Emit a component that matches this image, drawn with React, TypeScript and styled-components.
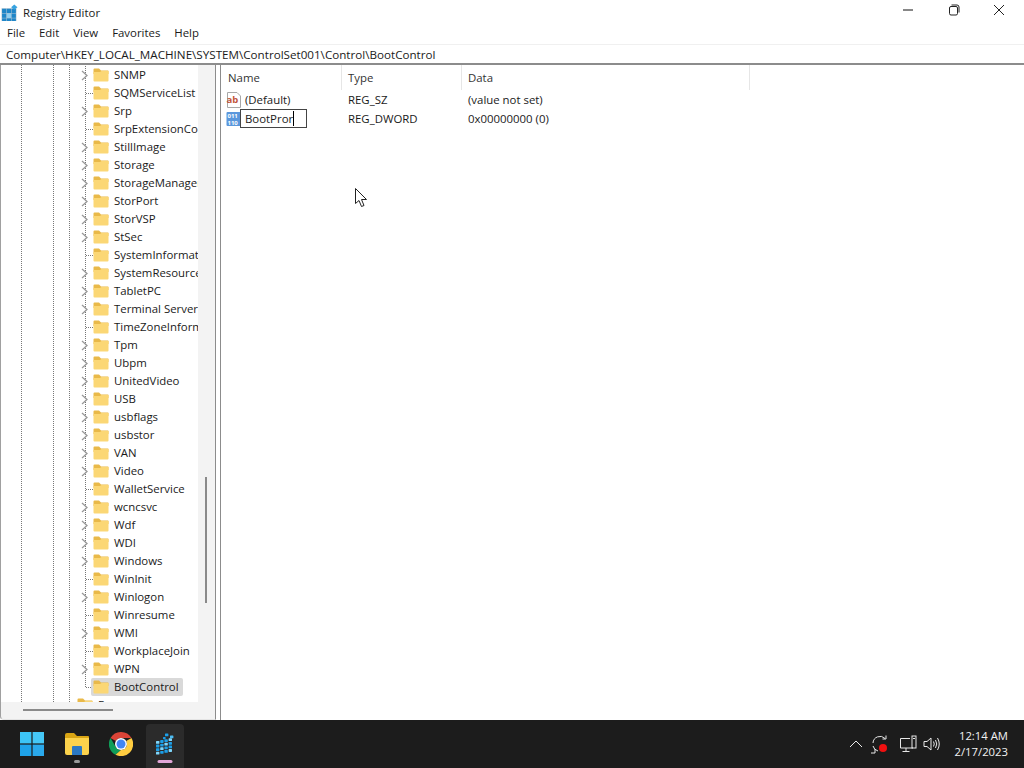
import styled, { createGlobalStyle } from 'styled-components';

const FONT = '"Open Sans", "Noto Sans", "Liberation Sans", sans-serif';

const GlobalStyle = createGlobalStyle`
  html, body {
    margin: 0;
    padding: 0;
    width: 1024px;
    height: 768px;
    overflow: hidden;
    background: #ffffff;
  }
  * { box-sizing: border-box; }
  svg { flex-shrink: 0; }
`;

const TREE_ITEMS: { name: string; expandable: boolean }[] = [
  { name: 'SNMP', expandable: true },
  { name: 'SQMServiceList', expandable: false },
  { name: 'Srp', expandable: true },
  { name: 'SrpExtensionConfig', expandable: false },
  { name: 'StillImage', expandable: true },
  { name: 'Storage', expandable: true },
  { name: 'StorageManagement', expandable: true },
  { name: 'StorPort', expandable: true },
  { name: 'StorVSP', expandable: true },
  { name: 'StSec', expandable: true },
  { name: 'SystemInformation', expandable: false },
  { name: 'SystemResources', expandable: true },
  { name: 'TabletPC', expandable: true },
  { name: 'Terminal Server', expandable: true },
  { name: 'TimeZoneInformation', expandable: false },
  { name: 'Tpm', expandable: true },
  { name: 'Ubpm', expandable: true },
  { name: 'UnitedVideo', expandable: true },
  { name: 'USB', expandable: true },
  { name: 'usbflags', expandable: true },
  { name: 'usbstor', expandable: true },
  { name: 'VAN', expandable: true },
  { name: 'Video', expandable: true },
  { name: 'WalletService', expandable: false },
  { name: 'wcncsvc', expandable: true },
  { name: 'Wdf', expandable: true },
  { name: 'WDI', expandable: true },
  { name: 'Windows', expandable: true },
  { name: 'WinInit', expandable: false },
  { name: 'Winlogon', expandable: true },
  { name: 'Winresume', expandable: false },
  { name: 'WMI', expandable: true },
  { name: 'WorkplaceJoin', expandable: false },
  { name: 'WPN', expandable: true },
];

function RegeditIcon() {
  const cells = [];
  for (let row = 0; row < 3; row++) {
    for (let col = 0; col < 3; col++) {
      cells.push(<rect key={`${row}-${col}`} x={1 + col * 4.5} y={4.5 + row * 4.5} width={4} height={4} fill={col === 1 && row === 1 ? '#8fd0f2' : '#1f86c8'} />);
    }
  }
  return (
    <svg width="17" height="17" viewBox="0 0 16 16">
      <rect x="0.5" y="4" width="14" height="12" fill="#0b4f80" opacity="0.35" />
      {cells}
      <path d="M12.5 0.5 L15.5 3 L12.5 5.5 L9.5 3 Z" fill="#37a3e0" />
    </svg>
  );
}

// taskbar version of the regedit logo, tilted cubes with a few loose ones at the top
function RegeditTaskIcon() {
  const cubes = [];
  for (let row = 0; row < 4; row++) {
    for (let col = 0; col < 4; col++) {
      const x = 2 + col * 4.2;
      const y = 9 + row * 3.6 - col * 0.9;
      cubes.push(<rect key={`${row}-${col}`} x={x} y={y} width={3.4} height={2.8} rx={0.6} fill={(row + col) % 3 === 0 ? '#7fd6fb' : '#1c9fe8'} />);
    }
  }
  return (
    <svg width="22" height="26" viewBox="0 0 22 26">
      {cubes}
      <rect x="11" y="1.5" width="3.4" height="2.8" rx="0.6" fill="#1c9fe8" />
      <rect x="16" y="3.5" width="3.4" height="2.8" rx="0.6" fill="#4dbcf2" />
      <rect x="9" y="5" width="2.6" height="2.2" rx="0.6" fill="#1c9fe8" />
    </svg>
  );
}

function FolderIcon() {
  return (
    <svg width="16" height="14" viewBox="0 0 16 14">
      <path d="M0.5 1.5 Q0.5 0.5 1.5 0.5 H6 L8 2.5 H15 Q15.5 2.5 15.5 3.5 V6 H0.5 Z" fill="#e9b949" />
      <path d="M0.5 4 H7 L8.5 3 H15.5 V12.5 Q15.5 13.5 14.5 13.5 H1.5 Q0.5 13.5 0.5 12.5 Z" fill="#fbd775" />
    </svg>
  );
}

function Chevron() {
  return (
    <svg width="7" height="11" viewBox="0 0 7 11">
      <path d="M1 1 L6 5.5 L1 10" fill="none" stroke="#999" strokeWidth="1.3" />
    </svg>
  );
}

export default function App() {
  return (
    <Screen>
      <GlobalStyle />
      <Window>
        <TitleBar>
          <TitleIcon><RegeditIcon /></TitleIcon>
          <TitleText>Registry Editor</TitleText>
          <WindowControls>
            <ControlButton>
              <svg width="12" height="12" viewBox="0 0 12 12"><path d="M1 6 H11" stroke="#111" strokeWidth="1" /></svg>
            </ControlButton>
            <ControlButton>
              <svg width="12" height="12" viewBox="0 0 12 12" fill="none" stroke="#222" strokeWidth="1">
                <rect x="1.5" y="2.5" width="8" height="8.5" rx="1.5" />
                <path d="M3.5 1 H9 Q11 1 11 3 V8.5" />
              </svg>
            </ControlButton>
            <ControlButton>
              <svg width="12" height="12" viewBox="0 0 12 12"><path d="M1 1 L11 11 M11 1 L1 11" stroke="#222" strokeWidth="1" /></svg>
            </ControlButton>
          </WindowControls>
        </TitleBar>

        <MenuBar>
          <MenuItem>File</MenuItem>
          <MenuItem>Edit</MenuItem>
          <MenuItem>View</MenuItem>
          <MenuItem>Favorites</MenuItem>
          <MenuItem>Help</MenuItem>
        </MenuBar>

        <AddressBar>Computer\HKEY_LOCAL_MACHINE\SYSTEM\ControlSet001\Control\BootControl</AddressBar>

        <Panes>
          <TreePane>
            <TreeBody>
              <TreeList>
                {TREE_ITEMS.map((item) => (
                  <TreeRow key={item.name} $leaf={!item.expandable}>
                    <ChevronSlot>{item.expandable && <Chevron />}</ChevronSlot>
                    <FolderIcon />
                    <TreeLabel>{item.name}</TreeLabel>
                  </TreeRow>
                ))}
                <TreeRow $leaf $last>
                  <ChevronSlot />
                  <SelectedLabel>
                    <FolderIcon />
                    <TreeLabel>BootControl</TreeLabel>
                  </SelectedLabel>
                </TreeRow>
                <ParentRow>
                  <FolderIcon />
                  <TreeLabel>Enum</TreeLabel>
                </ParentRow>
              </TreeList>
              <VerticalTrack>
                <VerticalThumb />
              </VerticalTrack>
            </TreeBody>
            <HorizontalTrack>
              <HorizontalThumb />
            </HorizontalTrack>
          </TreePane>

          <Splitter />

          <ValuesPane>
            <HeaderRow>
              <HeaderCell $width={121}>Name</HeaderCell>
              <HeaderCell $width={120}>Type</HeaderCell>
              <HeaderCell $width={288}>Data</HeaderCell>
            </HeaderRow>
            <ValueRow>
              <NameCell>
                <svg width="16" height="16" viewBox="0 0 16 16">
                  <path d="M1.5 0.5 H11 L14.5 4 V15.5 H1.5 Z" fill="#fff" stroke="#a8a8a8" />
                  <text x="0.5" y="10.5" fontSize="9.5" fontWeight="700" fill="#c2553a" fontFamily={FONT}>ab</text>
                </svg>
                <ValueName>(Default)</ValueName>
              </NameCell>
              <TypeCell>REG_SZ</TypeCell>
              <DataCell>(value not set)</DataCell>
            </ValueRow>
            <ValueRow>
              <NameCell>
                <svg width="16" height="16" viewBox="0 0 16 16">
                  <rect x="0.5" y="1" width="15" height="14" rx="1" fill="#5b97dc" />
                  <text x="1.5" y="7" fontSize="6" fontWeight="700" fill="#fff" fontFamily={FONT}>011</text>
                  <text x="1.5" y="13.5" fontSize="6" fontWeight="700" fill="#fff" fontFamily={FONT}>110</text>
                </svg>
                <RenameBox>BootPror<Caret /></RenameBox>
              </NameCell>
              <TypeCell>REG_DWORD</TypeCell>
              <DataCell>0x00000000 (0)</DataCell>
            </ValueRow>
          </ValuesPane>
        </Panes>
      </Window>

      <Taskbar>
        <TaskButton>
          <svg width="24" height="24" viewBox="0 0 24 24">
            <rect x="0" y="0" width="11.4" height="11.4" fill="#3cc4f5" />
            <rect x="12.6" y="0" width="11.4" height="11.4" fill="#45c8f7" />
            <rect x="0" y="12.6" width="11.4" height="11.4" fill="#1ea2e8" />
            <rect x="12.6" y="12.6" width="11.4" height="11.4" fill="#2aa9ec" />
          </svg>
        </TaskButton>
        <TaskButton $indicator="#9a9a9a">
          <svg width="26" height="24" viewBox="0 0 26 24">
            <path d="M1 3 Q1 1 3 1 H10 L13 4 H24 Q25 4 25 5 V8 H1 Z" fill="#d9a514" />
            <path d="M1 6 H25 V21 Q25 23 23 23 H3 Q1 23 1 21 Z" fill="#fbd24c" />
            <path d="M8 15 Q8 14 9 14 H17 Q18 14 18 15 V23 H8 Z" fill="#2b78c2" />
          </svg>
        </TaskButton>
        <TaskButton>
          <svg width="24" height="24" viewBox="0 0 48 48">
            <path d="M3 12 A24 24 0 0 1 24 0 A24 24 0 0 1 45 12 H24 A12 12 0 0 0 13.6 18 Z" fill="#db4437" />
            <path d="M3 12 A24 24 0 0 0 13 45.4 L24 36 A12 12 0 0 1 13.6 30 Z" fill="#0f9d58" />
            <path d="M45 12 A24 24 0 0 1 13 45.4 L24 36 A12 12 0 0 0 34.4 18 Z" fill="#ffcd40" />
            <circle cx="24" cy="24" r="12" fill="#fff" />
            <circle cx="24" cy="24" r="9" fill="#4285f4" />
          </svg>
        </TaskButton>
        <TaskButton $active $indicator="#e3a6d8" $wideIndicator>
          <RegeditTaskIcon />
        </TaskButton>

        <Tray>
          <TrayIcon $width={24}>
            <svg width="14" height="8" viewBox="0 0 14 8"><path d="M1 7 L7 1 L13 7" fill="none" stroke="#e8e8e8" strokeWidth="1" /></svg>
          </TrayIcon>
          <TrayIcon $width={24}>
            <svg width="20" height="20" viewBox="0 0 20 20" fill="none" stroke="#e8e8e8" strokeWidth="1">
              <path d="M3 9 A7 7 0 0 1 15 4.5 M16 1.5 V5 H12.5" />
              <path d="M3 12 A7 7 0 0 0 8 17 M1 19 H5 V15" />
              <circle cx="13" cy="14" r="4" fill="#f01010" stroke="none" />
            </svg>
          </TrayIcon>
          <TrayIcon $width={32}>
            <svg width="18" height="18" viewBox="0 0 18 18" fill="none" stroke="#e8e8e8" strokeWidth="1">
              <path d="M11 3.5 H1.5 V13 H14" />
              <path d="M7 13 V16 M3.5 16.5 H10.5" />
              <rect x="13" y="1" width="4" height="12" />
              <path d="M14 3.5 H16" />
            </svg>
          </TrayIcon>
          <TrayIcon $width={16}>
            <svg width="18" height="16" viewBox="0 0 18 16" fill="none" stroke="#e8e8e8" strokeWidth="1">
              <path d="M1 5.5 H4 L8 2 V14 L4 10.5 H1 Z" />
              <path d="M10.5 5.5 Q12 8 10.5 10.5 M12.5 4 Q15 8 12.5 12 M14.5 2 Q18 8 14.5 14" />
            </svg>
          </TrayIcon>
          <Clock>
            <span>12:14 AM</span>
            <span>2/17/2023</span>
          </Clock>
        </Tray>
      </Taskbar>

      <Pointer>
        <svg width="13" height="20" viewBox="0 0 13 20">
          <path d="M0.5 0.5 V15.5 L4 12.5 L6.5 18.5 L9 17.5 L6.5 11.5 H11.5 Z" fill="#fff" stroke="#222" strokeWidth="1" />
        </svg>
      </Pointer>
    </Screen>
  );
}

const Screen = styled.div`
  position: relative;
  width: 1024px;
  height: 768px;
  display: flex;
  flex-direction: column;
  font-family: ${FONT};
  font-size: 11.4px;
  color: #1a1a1a;
  overflow: hidden;
`;

const Window = styled.div`
  flex: 1;
  min-height: 0;
  display: flex;
  flex-direction: column;
  background: #ffffff;
`;

const TitleBar = styled.div`
  height: 24px;
  display: flex;
  align-items: center;
  padding-left: 1px;
`;

const TitleIcon = styled.span`
  display: flex;
  width: 22px;
`;

const TitleText = styled.span`
  flex: 1;
`;

const WindowControls = styled.div`
  display: flex;
  align-self: flex-start;
  padding-right: 2px;
`;

const ControlButton = styled.span`
  width: 45.5px;
  height: 20px;
  display: flex;
  align-items: center;
  justify-content: center;
`;

const MenuBar = styled.div`
  height: 17px;
  display: flex;
  align-items: center;
  padding-left: 7px;
  gap: 14px;
`;

const MenuItem = styled.span``;

const AddressBar = styled.div`
  height: 19px;
  margin-top: 3px;
  display: flex;
  align-items: center;
  padding-left: 6px;
  font-size: 11.65px;
  background: #ffffff;
  border-top: 1px solid #f0f0f0;
`;

const Panes = styled.div`
  flex: 1;
  min-height: 0;
  display: flex;
  border-top: 2px solid #8c8c8c;
`;

const TreePane = styled.div`
  width: 216px;
  display: flex;
  flex-direction: column;
  border-left: 1px solid #a0a0a0;
  border-right: 1px solid #8c8c8c;
  border-bottom: 1px solid #e4e4e4;
  border-bottom-left-radius: 4px;
  background: #f3f3f3;
`;

const TreeBody = styled.div`
  flex: 1;
  min-height: 0;
  display: flex;
`;

const TreeList = styled.div`
  width: 197px;
  height: 637px;
  padding-top: 1px;
  overflow: hidden;
  background-color: #ffffff;
  background-image:
    repeating-linear-gradient(to bottom, #777 0 1px, transparent 1px 2px),
    repeating-linear-gradient(to bottom, #777 0 1px, transparent 1px 2px),
    repeating-linear-gradient(to bottom, #777 0 1px, transparent 1px 2px);
  background-size: 1px 100%;
  background-repeat: no-repeat;
  background-position: 20px 0, 52px 0, 68px 0;
`;

const TreeRow = styled.div<{ $leaf?: boolean; $last?: boolean }>`
  height: 18px;
  display: flex;
  align-items: center;
  padding-left: 80px;
  background-image:
    repeating-linear-gradient(to bottom, #777 0 1px, transparent 1px 2px)
    ${(props) => (props.$leaf ? ', repeating-linear-gradient(to right, #777 0 1px, transparent 1px 2px)' : '')};
  background-repeat: no-repeat;
  background-size: 1px ${(props) => (props.$last ? '9px' : '100%')}${(props) => (props.$leaf ? ', 7px 1px' : '')};
  background-position: 84px 0${(props) => (props.$leaf ? ', 85px 9px' : '')};
`;

const ChevronSlot = styled.span`
  width: 12px;
  height: 11px;
  display: flex;
  flex-shrink: 0;
`;

const TreeLabel = styled.span`
  margin-left: 5px;
  white-space: nowrap;
  line-height: 18px;
`;

const SelectedLabel = styled.span`
  display: flex;
  align-items: center;
  height: 18px;
  padding-right: 4px;
  background: #d9d9d9;
  margin-left: -2px;
  padding-left: 2px;
  border-radius: 2px;
`;

const ParentRow = styled.div`
  height: 18px;
  display: flex;
  align-items: center;
  padding-left: 76px;
`;

const VerticalTrack = styled.div`
  position: relative;
  flex: 1;
`;

const VerticalThumb = styled.div`
  position: absolute;
  left: 7px;
  top: 412px;
  width: 2px;
  height: 126px;
  background: #8a8a8a;
`;

const HorizontalTrack = styled.div`
  height: 17px;
  display: flex;
  align-items: center;
  padding: 0 0 0 22px;
  margin-bottom: 1px;
`;

const HorizontalThumb = styled.div`
  width: 90px;
  height: 2px;
  background: #8a8a8a;
`;

const Splitter = styled.div`
  width: 4px;
  background: #ffffff;
`;

const ValuesPane = styled.div`
  flex: 1;
  border-left: 1px solid #8c8c8c;
  background: #ffffff;
`;

const HeaderRow = styled.div`
  height: 25px;
  display: flex;
`;

const HeaderCell = styled.div<{ $width: number }>`
  width: ${(props) => props.$width}px;
  padding-left: 6px;
  display: flex;
  align-items: center;
  border-right: 1px solid #e6e6e6;
  color: #333;

  &:first-child {
    padding-left: 7px;
  }
`;

const ValueRow = styled.div`
  height: 19px;
  display: flex;
  align-items: center;
`;

const NameCell = styled.div`
  width: 122px;
  padding-left: 5px;
  display: flex;
  align-items: center;
`;

const ValueName = styled.span`
  margin-left: 3px;
`;

const RenameBox = styled.span`
  position: relative;
  z-index: 1;
  width: 67px;
  height: 19px;
  margin-left: -2px;
  padding-left: 4px;
  display: flex;
  align-items: center;
  background: #ffffff;
  border: 1px solid #444;
`;

const Caret = styled.span`
  width: 1px;
  height: 15px;
  background: #000;
`;

const TypeCell = styled.div`
  width: 120px;
  padding-left: 5px;
`;

const DataCell = styled.div`
  padding-left: 5px;
`;

const Taskbar = styled.div`
  height: 48px;
  display: flex;
  align-items: flex-end;
  padding-left: 10px;
  background: #1c1c1c;
`;

const TaskButton = styled.div<{ $active?: boolean; $indicator?: string; $wideIndicator?: boolean }>`
  position: relative;
  width: 38px;
  height: 44px;
  margin: 0 3.2px;
  border-radius: 4px 4px 0 0;
  display: flex;
  align-items: flex-start;
  justify-content: center;
  padding-top: 8px;
  background: ${(props) => (props.$active ? '#2b2b2b' : 'transparent')};

  &::after {
    content: '';
    display: ${(props) => (props.$indicator ? 'block' : 'none')};
    position: absolute;
    bottom: 5px;
    left: 50%;
    transform: translateX(-50%);
    width: ${(props) => (props.$wideIndicator ? '15px' : '6px')};
    height: 3px;
    border-radius: 2px;
    background: ${(props) => props.$indicator};
  }
`;

const Tray = styled.div`
  margin-left: auto;
  height: 48px;
  display: flex;
  align-items: center;
  padding-right: 16px;
`;

const TrayIcon = styled.span<{ $width: number }>`
  width: ${(props) => props.$width}px;
  display: flex;
  justify-content: center;
`;

const Clock = styled.div`
  width: 60px;
  margin-left: 8px;
  display: flex;
  flex-direction: column;
  align-items: flex-end;
  color: #f2f2f2;
  font-size: 11.3px;
  line-height: 16px;
`;

const Pointer = styled.div`
  position: absolute;
  left: 355px;
  top: 188px;
  display: flex;
`;
